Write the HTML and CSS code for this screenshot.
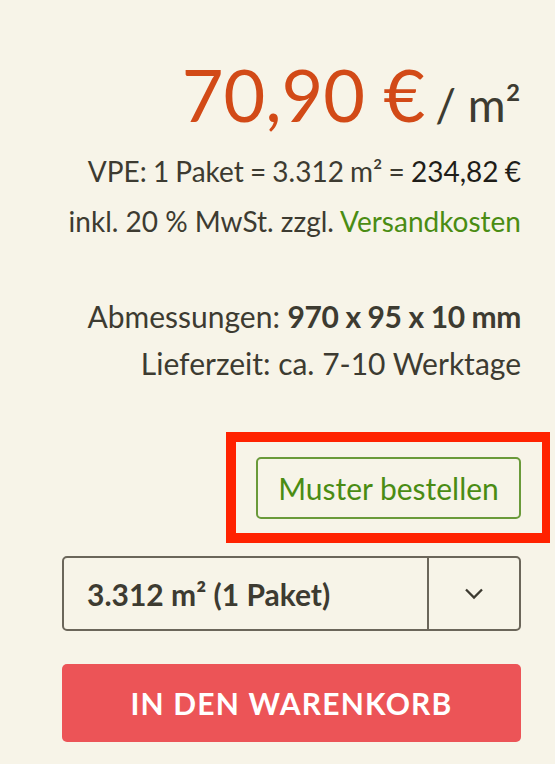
FILE: index.html
```html
<!DOCTYPE html>
<html lang="de">
<head>
    <meta charset="UTF-8">
    <meta name="viewport" content="width=device-width, initial-scale=1.0">
    <title>Produkt</title>
    <link rel="stylesheet" href="styles.css">
</head>
<body>
    <div class="buybox">
        <div class="price"><span class="amount">70,90 €</span><span class="unit">/ m²</span></div>
        <p class="line vpe">VPE: 1 Paket = 3.312 m² = <span class="total">234,82 €</span></p>
        <p class="line">inkl. 20 % MwSt. zzgl. <a href="#" class="link">Versandkosten</a></p>

        <div class="specs">
            <p class="spec">Abmessungen: <strong>970 x 95 x 10 mm</strong></p>
            <p class="spec">Lieferzeit: ca. 7-10 Werktage</p>
        </div>

        <div class="sample">
            <div class="highlight">
                <button class="btn-sample">Muster bestellen</button>
            </div>
        </div>

        <div class="qty">
            <span class="qty-value">3.312 m² (1 Paket)</span>
            <span class="qty-arrow">
                <svg width="20" height="13" viewBox="0 0 20 13"><path d="M2 2.5 L10 10.5 L18 2.5" fill="none" stroke="#3d3a30" stroke-width="2.3"/></svg>
            </span>
        </div>

        <button class="btn-cart">IN DEN WARENKORB</button>
    </div>
</body>
</html>
```

FILE: styles.css
```css
body {
    font-family: 'Lato', 'Open Sans', sans-serif;
    background: #f7f4e8;
    color: #3d3b31;
    margin: 0;
    padding: 0;
}

.buybox {
    margin: 0 34px 0 62px;
    padding-top: 58px;
    text-align: right;
}

.price {
    font-size: 72px;
    line-height: 72px;
    margin-bottom: 21px;
}

.amount {
    color: #d24a17;
}

.unit {
    font-size: 46px;
    line-height: 1;
    margin-left: 10px;
}

.line {
    font-size: 28px;
    line-height: 40px;
    margin: 0 0 10px;
}

.vpe {
    word-spacing: -1px;
}

.total {
    color: #1f1d18;
}

.link {
    color: #4a8c13;
    text-decoration: none;
}

/* Abmessungen */
.specs {
    margin-top: 52px;
}

.spec {
    font-size: 30px;
    line-height: 47px;
    margin: 0;
}

.spec strong {
    font-weight: bold;
    letter-spacing: -0.4px;
}

/* Muster */
.sample {
    display: flex;
    justify-content: flex-end;
    margin-top: 45px;
    margin-right: -29px;
}

.highlight {
    border: 10px solid #ff2200;
    border-right-width: 8px;
    padding: 15px 21px 14px 20px;
}

.btn-sample {
    font-family: inherit;
    font-size: 30px;
    color: #4a8c13;
    background: transparent;
    border: 2px solid #6a9a3a;
    border-radius: 5px;
    height: 62px;
    width: 265px;
    padding: 0;
    cursor: pointer;
}

/* Menge */
.qty {
    display: flex;
    margin-top: 13px;
    height: 75px;
    border: 2px solid #6b665a;
    border-radius: 5px;
    box-sizing: border-box;
}

.qty-value {
    flex: 1;
    display: flex;
    align-items: center;
    padding-left: 23px;
    font-size: 30px;
    font-weight: bold;
    text-align: left;
    border-right: 2px solid #6b665a;
}

.qty-arrow {
    width: 90px;
    display: flex;
    align-items: center;
    justify-content: center;
}

.btn-cart {
    display: block;
    width: 100%;
    height: 78px;
    margin-top: 33px;
    background: #ec5457;
    color: white;
    border: none;
    border-radius: 5px;
    font-family: inherit;
    font-size: 30px;
    font-weight: bold;
    letter-spacing: 1.2px;
    cursor: pointer;
}
```
